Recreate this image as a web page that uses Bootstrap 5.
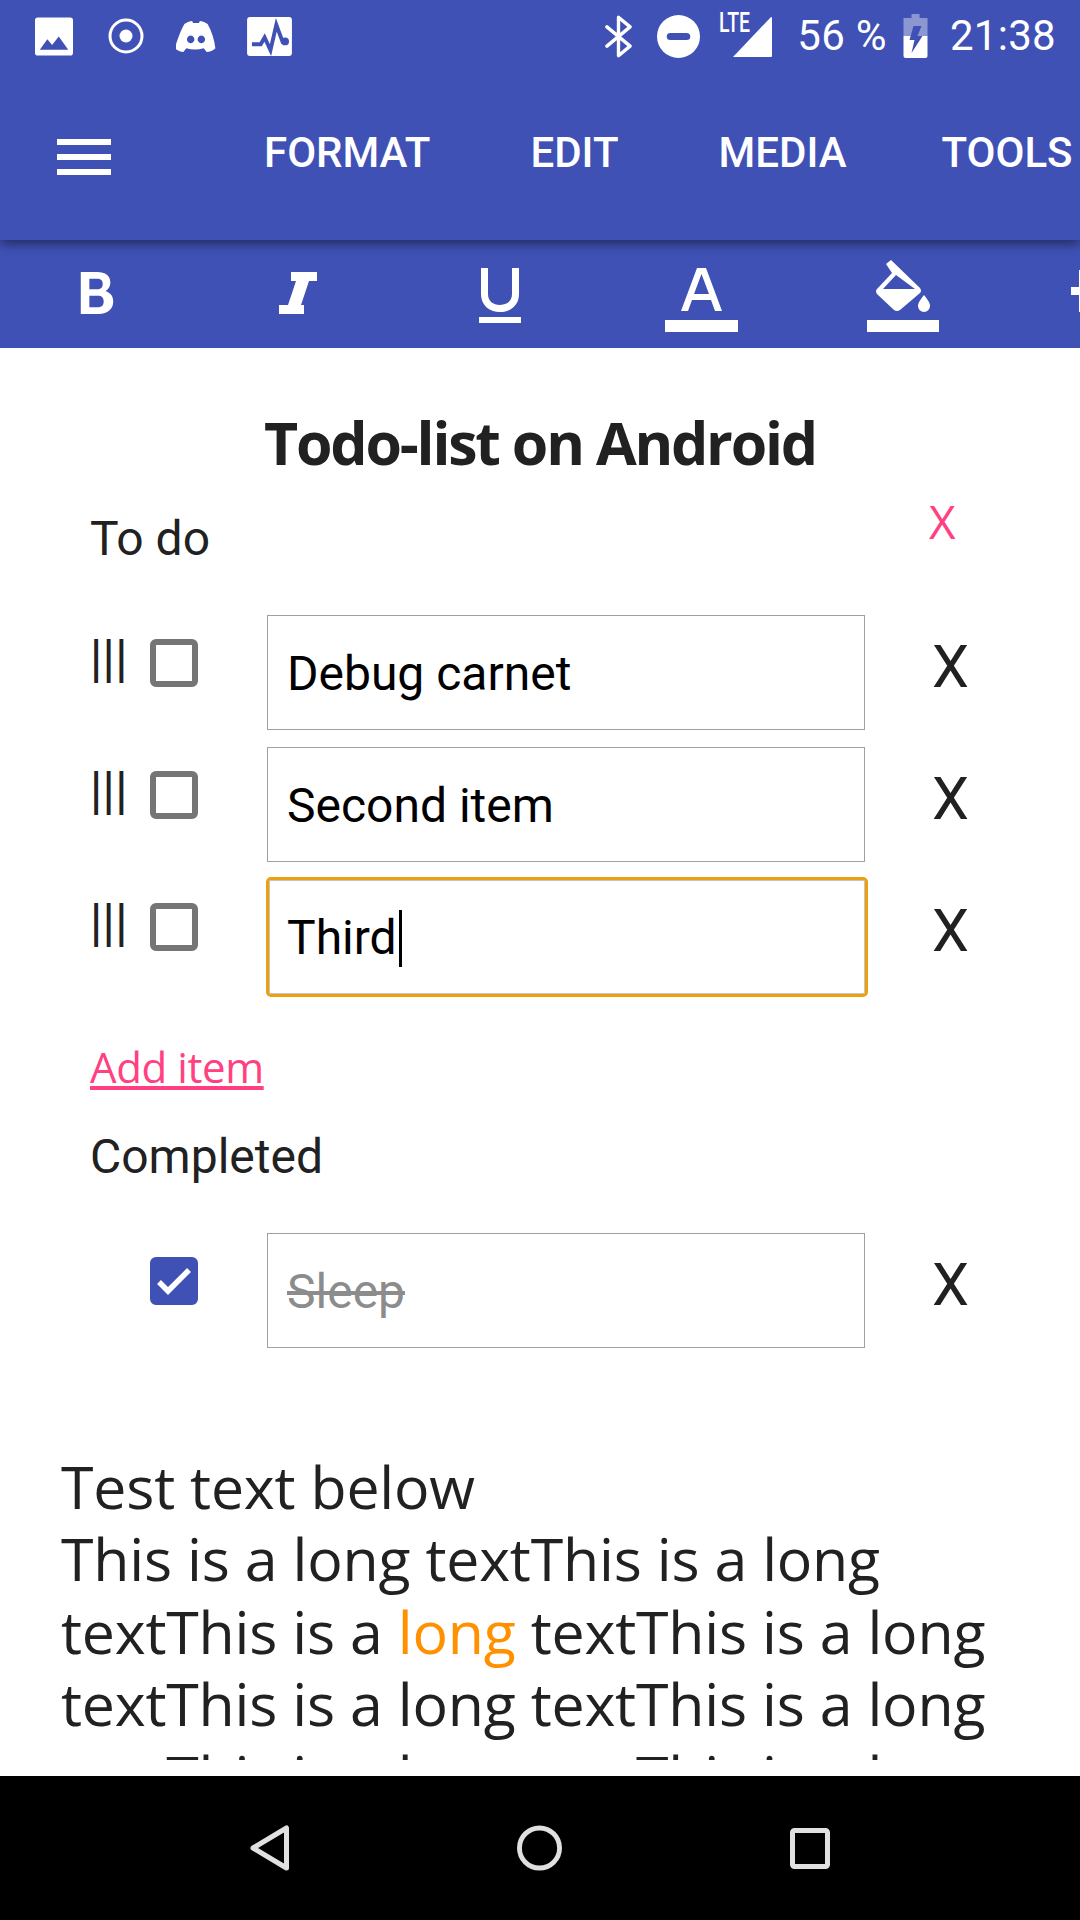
<!DOCTYPE html>
<html lang="en">
<head>
    <meta charset="UTF-8">
    <title>Todo-list on Android</title>
    <link href="https://cdn.jsdelivr.net/npm/bootstrap@5.3.3/dist/css/bootstrap.min.css" rel="stylesheet">
    <style>
        html, body { height: 100%; overflow: hidden; }
        body { background: #fff; font-family: Roboto, sans-serif; color: #212121; }

        .phone { width: 1080px; height: 1920px; }

        /* status bar */
        .status-bar { height: 72px; background: #3f51b5; color: #fff; padding: 0 24px 0 35px; position: relative; z-index: 3; }
        .status-bar svg { display: block; flex: none; }
        .status-text { font-size: 42px; line-height: 72px; letter-spacing: .3px; }
        .st-radio { margin-left: 35px; }
        .st-discord { margin-left: 32px; }
        .st-activity { margin-left: 30px; }
        .st-circle { margin-left: 25px; }
        .st-signal { width: 53px; height: 44px; margin-left: 19px; position: relative; flex: none; }
        .st-lte { position: absolute; left: 0; top: -7px; font-size: 27px; font-weight: 500; line-height: 32px; transform: scaleX(.72); transform-origin: left top; }
        .st-bars { position: absolute; left: 13px; top: 3px; }
        .st-percent { margin-left: 25px; }
        .st-battery { margin-left: 16px; }
        .st-time { margin-left: 22px; }

        /* app bar */
        .app-bar { height: 168px; background: #3f51b5; color: #fff; position: relative; z-index: 2; box-shadow: 0 4px 10px rgba(0,0,0,.45); }
        .menu-btn { width: 255px; padding-left: 57px; margin-top: 2px; }
        .menu-tab { font-size: 42px; font-weight: 500; color: #fff; white-space: nowrap; line-height: 48px; margin-bottom: 6px; }
        .tab-format { margin-left: 9px; }
        .tab-edit { margin-left: 100px; }
        .tab-media { margin-left: 100px; }
        .tab-tools { margin-left: 95px; }

        /* format bar */
        .format-bar { height: 108px; background: #3f51b5; overflow: hidden; }
        .format-bar svg { display: block; flex: none; }
        .fmt-bold { margin: 32px 0 0 80px; }
        .fmt-italic { margin: 32px 0 0 165px; }
        .fmt-under { margin: 28px 0 0 162px; }
        .fmt-color { margin: 28px 0 0 144px; }
        .fmt-fill { margin: 20px 0 0 129px; }
        .fmt-plus { margin: 30px 0 0 132px; }

        /* content */
        .doc { height: 1428px; background: #fff; }
        .doc-clip { height: 1412px; overflow: hidden; }
        .doc-title { font-family: "Open Sans", sans-serif; font-weight: 700; font-size: 59px; letter-spacing: -2.2px; line-height: 72px; text-align: center; margin: 0; padding-top: 58px; color: #212121; }
        .todo-box { padding: 0 0 0 90px; }
        .head-row { height: 64px; margin-top: 29px; }
        .head-label { font-size: 48px; line-height: 64px; }
        .head-todo { width: 839px; flex: none; }
        .head-x { font-family: "Open Sans", sans-serif; font-size: 46px; color: #ff4081; line-height: 64px; margin-top: -18px; }
        .gap-first { height: 44px; }
        .todo-row { height: 118px; margin-bottom: 14px; }
        .grip { width: 60px; flex: none; font-family: "Liberation Sans", sans-serif; font-size: 47px; letter-spacing: .4px; line-height: 44px; height: 44px; margin-top: 20px; color: #212121; }
        .tick { width: 48px; height: 48px; margin-top: 24px; border: 6px solid #757575; border-radius: 6px; flex: none; }
        .tick-done { background: #3f51b5; border-color: #3f51b5; }
        .tick-done svg { flex: none; }
        .todo-input { width: 598px; height: 115px; margin-left: 69px; border: 1px solid #a0a0a0; font-size: 48px; line-height: 116px; padding-left: 19px; color: #000; flex: none; }
        .todo-input-focus { width: 602px; height: 120px; margin-left: 68px; margin-top: -2px; border: 3px solid #eb9f11; border-radius: 5px; padding-left: 18px; box-shadow: inset 0 0 0 1px #c4c4c4; }
        .caret-mark { display: inline-block; width: 3px; height: 57px; background: #000; vertical-align: -13px; margin-left: 2px; }
        .done-text { color: #8c8c8c; text-decoration: line-through; }
        .row-x { font-size: 59px; color: #212121; line-height: 64px; margin-left: 67px; margin-top: 20px; }
        .row-x-focus { margin-left: 64px; }
        .add-row { margin-top: 42px; height: 64px; }
        .add-link { font-family: "Open Sans", sans-serif; font-size: 42px; color: #ff4081; letter-spacing: -.4px; line-height: 56px; text-decoration: underline; }
        .head-done { margin-top: 22px; }
        .gap-done { height: 44px; }
        .tick-spacer { width: 60px; flex: none; }
        .long-text { font-family: "Open Sans", sans-serif; font-size: 59px; line-height: 72.4px; padding: 85px 0 0 61px; letter-spacing: -.2px; color: #212121; white-space: nowrap; }
        .long-word { color: #ff9100; }

        /* android nav */
        .nav-bottom { height: 144px; background: #000; }
        .nav-home { margin-left: 227px; }
        .nav-recent { margin-left: 228px; }
    </style>
</head>
<body>
<div class="phone d-flex flex-column">

    <div class="status-bar d-flex align-items-center">
        <svg width="38" height="39" viewBox="0 0 40 40"><path fill="#fff" fill-rule="evenodd" d="M3 0h34a3 3 0 0 1 3 3v34a3 3 0 0 1-3 3H3a3 3 0 0 1-3-3V3a3 3 0 0 1 3-3zM5 34h30L25 20l-7 9-5-6z"/></svg>
        <svg class="st-radio" width="36" height="36" viewBox="0 0 36 36"><circle cx="18" cy="18" r="16" fill="none" stroke="#fff" stroke-width="3"/><circle cx="18" cy="18" r="6.500" fill="#fff"/></svg>
        <svg class="st-discord" width="40" height="31" viewBox="0 0 40 32"><path fill="#fff" fill-rule="evenodd" d="M8 3c3-2 6-3 8-3l1 2h6l1-2c2 0 5 1 8 3 4 7 7 16 8 25-2 2-6 4-9 4l-3-4c-6 2-12 2-18 0l-3 4c-3 0-7-2-9-4C1 19 4 10 8 3zm6.500 12a3.800 4 0 1 0 .01 0zm11 0a3.800 4 0 1 0 .01 0z"/></svg>
        <svg class="st-activity" width="47" height="39" viewBox="0 0 46 40"><path fill="#fff" d="M3 0h40a3 3 0 0 1 3 3v34a3 3 0 0 1-3 3H3a3 3 0 0 1-3-3V3a3 3 0 0 1 3-3z"/><path fill="none" stroke="#3f51b5" stroke-width="4" d="M5 28h9l4-7 6 13 6-26 7 19"/><circle cx="39" cy="25" r="4" fill="#3f51b5"/></svg>

        <svg class="ms-auto" width="27" height="43" viewBox="0 0 28 44"><path fill="none" stroke="#fff" stroke-width="3.500" stroke-linecap="round" stroke-linejoin="round" d="M2 12l24 20-12 10V2l12 10-24 20"/></svg>
        <svg class="st-circle" width="43" height="43" viewBox="0 0 42 42"><path fill="#fff" fill-rule="evenodd" d="M21 0a21 21 0 1 1 0 42a21 21 0 0 1 0-42zM13 17.500a3.500 3.500 0 0 0 0 7h16a3.500 3.500 0 0 0 0-7z"/></svg>
        <div class="st-signal">
            <span class="st-lte">LTE</span>
            <svg class="st-bars" width="40" height="40" viewBox="0 0 40 40"><path fill="#fff" d="M39 0a1 1 0 0 1 1 1v38a1 1 0 0 1-1 1H1z"/></svg>
        </div>
        <span class="status-text st-percent">56 %</span>
        <svg class="st-battery" width="25" height="44" viewBox="0 0 24 44"><path fill="#8c97d2" d="M8 0h8v4h8v18H0V4h8z"/><path fill="#fff" d="M0 22h24v20a2 2 0 0 1-2 2H2a2 2 0 0 1-2-2z"/><path fill="#3f51b5" d="M10 12h8l-4 10h5L8 39l3-13H6z"/></svg>
        <span class="status-text st-time">21:38</span>
    </div>

    <div class="app-bar d-flex align-items-center">
        <div class="menu-btn">
            <svg class="d-block" width="54" height="36" viewBox="0 0 54 36"><path fill="#fff" d="M0 0h54v6H0zM0 15h54v6H0zM0 30h54v6H0z"/></svg>
        </div>
        <span class="menu-tab tab-format">FORMAT</span>
        <span class="menu-tab tab-edit">EDIT</span>
        <span class="menu-tab tab-media">MEDIA</span>
        <span class="menu-tab tab-tools">TOOLS</span>
    </div>

    <div class="format-bar d-flex align-items-start">
        <svg class="fmt-bold" width="34" height="42" viewBox="0 0 34 44"><path fill="#fff" fill-rule="evenodd" d="M0 0h17c9 0 14 4 14 11 0 4-2 7-5 9 5 2 8 5 8 11 0 8-6 13-15 13H0zM9 7v11h8c4 0 6-2 6-5.500S21 7 17 7zm0 18v12h9c4 0 6-2 6-6s-2-6-6-6z"/></svg>
        <svg class="fmt-italic" width="38" height="42" viewBox="0 0 38 42"><path fill="#fff" d="M12 0h26v9h-8l-8 24h3v9H0v-9h9l8-24h-5z"/></svg>
        <svg class="fmt-under" width="42" height="55" viewBox="0 0 42 55"><path fill="#fff" d="M2 0h7v26c0 7 5 11 12 11s12-4 12-11V0h7v26c0 11-8 18-19 18S2 37 2 26zM0 49h42v6H0z"/></svg>
        <svg class="fmt-color" width="73" height="64" viewBox="0 0 73 64"><path fill="#fff" fill-rule="evenodd" d="M16 43L32 0h9l16 43h-7l-4-11H27l-4 11zM29 26h15L36.500 6zM0 52h73v12H0z"/></svg>
        <svg class="fmt-fill" width="72" height="72" viewBox="0 0 72 72"><path fill="#fff" fill-rule="evenodd" d="M24 0L53 28q2 3 0 5L33 50q-3 2-6 0L10 34q-2-3 0-5L25 13 19 4zM29 15L16 29H48zM57 35c4 5 6 8 6 11a6 6 0 0 1-12 0c0-3 2-6 6-11zM0 60h72v12H0z"/></svg>
        <svg class="fmt-plus" width="9" height="44" viewBox="0 0 9 44"><path fill="#fff" d="M0 17h9v8H0zM8 0h1v42H8z"/></svg>
    </div>

    <div class="doc flex-grow-0">
        <div class="doc-clip">
            <h1 class="doc-title">Todo-list on Android</h1>
            <div class="todo-box">
                <div class="head-row d-flex">
                    <span class="head-label head-todo">To do</span>
                    <span class="head-x">X</span>
                </div>
                <div class="gap-first"></div>
                <div class="todo-row d-flex align-items-start">
                    <span class="grip">|||</span><span class="tick"></span>
                    <div class="todo-input">Debug carnet</div>
                    <span class="row-x">X</span>
                </div>
                <div class="todo-row d-flex align-items-start">
                    <span class="grip">|||</span><span class="tick"></span>
                    <div class="todo-input">Second item</div>
                    <span class="row-x">X</span>
                </div>
                <div class="todo-row d-flex align-items-start">
                    <span class="grip">|||</span><span class="tick"></span>
                    <div class="todo-input todo-input-focus">Third<span class="caret-mark"></span></div>
                    <span class="row-x row-x-focus">X</span>
                </div>
                <div class="add-row"><a class="add-link" href="#">Add item</a></div>
                <div class="head-label head-done">Completed</div>
                <div class="gap-done"></div>
                <div class="todo-row d-flex align-items-start">
                    <span class="tick-spacer"></span>
                    <span class="tick tick-done d-flex align-items-center justify-content-center">
                        <svg width="34" height="28" viewBox="0 0 34 28"><path fill="none" stroke="#fff" stroke-width="5.500" d="M2 15l9 9L32 3"/></svg>
                    </span>
                    <div class="todo-input"><span class="done-text">Sleep</span></div>
                    <span class="row-x">X</span>
                </div>
            </div>
            <div class="long-text">Test text below<br>This is a long textThis is a long<br>textThis is a <span class="long-word">long</span> textThis is a long<br>textThis is a long textThis is a long<br>textThis is a long textThis is a long</div>
        </div>
    </div>

    <div class="nav-bottom d-flex align-items-center justify-content-center">
        <svg width="40" height="46" viewBox="0 0 40 46"><path fill="none" stroke="#e0e0e0" stroke-width="5" stroke-linejoin="round" d="M36.500 3v40L3 23z"/></svg>
        <svg class="nav-home" width="45" height="46" viewBox="0 0 46 46"><circle cx="23" cy="23" r="20.500" fill="none" stroke="#e0e0e0" stroke-width="5"/></svg>
        <svg class="nav-recent" width="40" height="41" viewBox="0 0 40 41"><rect x="2.500" y="2.500" width="35" height="36" rx="2" fill="none" stroke="#e0e0e0" stroke-width="5"/></svg>
    </div>
</div>
<script src="https://cdn.jsdelivr.net/npm/bootstrap@5.3.3/dist/js/bootstrap.bundle.min.js"></script>
</body>
</html>
